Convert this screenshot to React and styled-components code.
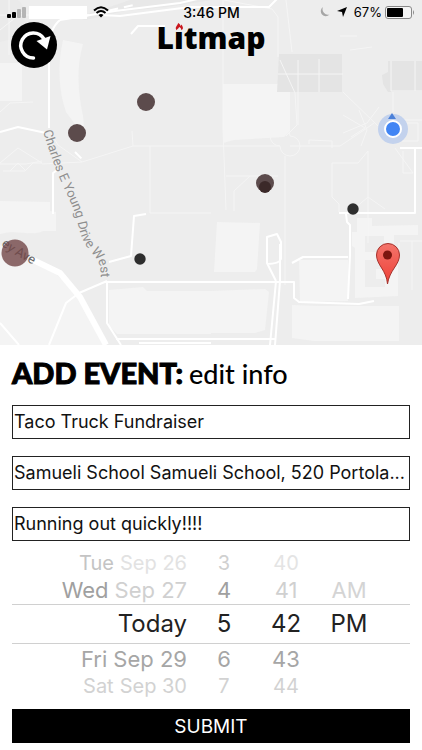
import React, { useState } from "react";
import styled, { createGlobalStyle } from "styled-components";

const GlobalStyle = createGlobalStyle`
  * { box-sizing: border-box; }
  body {
    margin: 0;
    background: #fff;
    color: #000;
    font-family: Inter, "Liberation Sans", sans-serif;
  }
`;

const Page = styled.main`
  display: flex;
  flex-direction: column;
  min-height: 100vh;
`;

const MapArea = styled.section`
  position: relative;
  height: 345px;
  overflow: hidden;
  background: #ededed;
`;

const MapDrawing = styled.svg`
  display: block;
  width: 100%;
  height: 100%;
`;

const Overlay = styled.div`
  position: absolute;
  inset: 0 0 auto 0;
`;

const StatusBar = styled.div`
  display: grid;
  grid-template-columns: 1fr auto 1fr;
  align-items: center;
  height: 24px;
  padding: 0 6px 0 7px;
  font-size: 13px;
`;

const Clock = styled.span`
  font-size: 14px;
  font-weight: 500;
`;

const StatusGroup = styled.div`
  display: flex;
  align-items: center;
  justify-content: ${(p) => (p.$end ? "flex-end" : "flex-start")};
  gap: ${(p) => p.$gap}px;
`;

const CarrierMask = styled.span`
  width: 58px;
  height: 13px;
  background: #fff;
`;

const Header = styled.header`
  display: grid;
  grid-template-columns: 46px 1fr 46px;
  align-items: start;
  padding: 0 11px;
`;

const RefreshButton = styled.button`
  width: 46px;
  height: 46px;
  margin-top: -2px;
  padding: 0;
  border: 0;
  border-radius: 50%;
  background: #000;
  cursor: pointer;
`;

const Logo = styled.h1`
  display: flex;
  justify-content: center;
  margin: 0;
  font-family: "Open Sans", sans-serif;
  font-size: 30px;
  font-weight: 800;
  line-height: 28px;
`;

const FlameLetter = styled.span`
  position: relative;
`;

const Flame = styled.svg`
  position: absolute;
  top: -1px;
  left: 50%;
  width: 8px;
  height: 8px;
  margin-left: -4px;
`;

const Form = styled.form`
  display: flex;
  flex-direction: column;
  padding: 10px 12px 8px;
`;

const Title = styled.h2`
  display: flex;
  align-items: baseline;
  gap: 6px;
  margin: 0 0 13px;
  font-family: Lato, sans-serif;
  font-size: 29px;
  font-weight: 900;
  line-height: 36px;
  -webkit-text-stroke: 1px #000;
`;

const Step = styled.span`
  font-size: 27px;
  font-weight: 500;
  -webkit-text-stroke: 0;
`;

const Fields = styled.div`
  display: flex;
  flex-direction: column;
  gap: 17px;
`;

const Field = styled.input`
  width: 100%;
  height: 34px;
  padding: 0 1px 2px;
  border: 1px solid #222;
  border-radius: 0;
  background: #fff;
  color: #111;
  font-family: inherit;
  font-size: 18px;
  text-overflow: ellipsis;
`;

const Picker = styled.div`
  display: grid;
  grid-template-columns: 176fr 72fr 52fr 98fr;
  margin: 10px 0 11px;
`;

const Wheel = styled.div`
  display: grid;
  grid-template-rows: 24px 29px 40px 29px 25px;
`;

const tones = ["#dedede", "#b4b4b4", "#222", "#a6a6a6", "#d2d2d2"];
const sizes = [20, 22, 24, 22, 20];

const Option = styled.button`
  display: flex;
  align-items: center;
  justify-content: ${(p) => (p.$end ? "flex-end" : "center")};
  gap: 6px;
  padding: 0 ${(p) => p.$inset}px 0 0;
  border: 0 solid #d0d0d0;
  border-width: ${(p) => (p.$slot === 2 ? "1px 0" : "0")};
  background: none;
  color: ${(p) => p.$tone || tones[p.$slot]};
  font-family: inherit;
  font-size: ${(p) => sizes[p.$slot]}px;
  line-height: 24px;
  white-space: nowrap;
`;

const Weekday = styled.span`
  color: ${(p) => p.$tone};
`;

const Submit = styled.button`
  height: 34px;
  border: 0;
  background: #000;
  color: #fff;
  font-family: inherit;
  font-size: 19px;
  cursor: pointer;
`;

const dates = [
  { day: "Tue", date: "Sep 26", dayTone: "#c4c4c4", tone: "#e2e2e2" },
  { day: "Wed", date: "Sep 27", dayTone: "#a0a0a0", tone: "#d0d0d0" },
  { date: "Today" },
  { day: "Fri", date: "Sep 29", dayTone: "#a6a6a6" },
  { day: "Sat", date: "Sep 30", dayTone: "#d2d2d2" },
];

const wheels = [
  { label: "Hour", values: ["3", "4", "5", "6", "7"], tones: ["#d0d0d0", "#a0a0a0"], inset: 0 },
  { label: "Minute", values: ["40", "41", "42", "43", "44"], tones: ["#e4e4e4", "#d0d0d0"], inset: 0 },
  { label: "AM or PM", values: ["", "AM", "PM", "", ""], tones: ["", "#d4d4d4"], inset: 24 },
];

function CampusMap() {
  return (
    <MapDrawing viewBox="0 0 422 345" preserveAspectRatio="xMidYMid slice" role="img" aria-label="Campus map">
      <defs>
        <path id="charles" d="M43 131C49 150 54 165 59 177C67 195 73 205 77 220C80 235 83 243 92 253C99 261 101 265 101 280V290" />
        <path id="avenue" d="M1 245L10 252L46 272" />
        <linearGradient id="pin" x1="0" y1="0" x2="0" y2="1">
          <stop offset="0" stopColor="#f4746b" />
          <stop offset="1" stopColor="#ee4037" />
        </linearGradient>
      </defs>
      <rect width="422" height="345" fill="#ededed" />
      <g fill="#f4f4f4">
        <path d="M0 63h22v38H0z" />
        <path d="M63 40l20 4c-7 24-5 48 0 72l2 22-19-26C59 92 57 66 63 40z" />
        <path d="M223 84h67v47l-6 6-50 3-11 3z" />
        <path d="M0 201l50 1v9l6 1v19H43c-12 6-24-2-43 3z" />
        <path d="M0 245l28 16 28 13 22 20 27 51H0z" />
        <path d="M109 290l34-3 4 4h64v43h-94l-8-8z" />
        <path d="M217 222l43 1-3 46-2 3h-41z" />
        <path d="M211 291l54-2 4 3-4 38-10 3h-44z" />
        <path d="M299 260h49v41l-48 1z" />
        <path fillRule="evenodd" d="M357 218h15v8l46-1v10h-24v16h4v45l-43 2v-50l-3-2v-14h5zM365 236v16h19v-16zM365 260v27h20v-8h-9v-10h9v-9z" />
        <path d="M292 305l27 1h80v35h-85l-22-3z" />
      </g>
      <g fill="#e4e4e4">
        <path d="M279 54h63v38h-65z" />
        <path d="M388 61h34v31h-34l-5-8-1-9 6-3z" />
        <path d="M0 0h18c10 7 9 31-2 38L0 42z" opacity=".3" />
        <path d="M85 20l40-9 42-4 45-7h-82l-23 8-30 9z" opacity=".6" />
      </g>
      <g fill="none" stroke="#f5f5f5" strokeWidth="1">
        <path d="M0 15h30M9 0v55M0 30l25-20M0 112l10-9 23-1M0 164h26l16-3M0 163l18-15 24 15h-9l-8 8H3M10 171l8-8 8 8M42 164l40-2 51-16h78M133 146l-1-15M150 146v67h61M82 162l-24-17-9-15M223 0v130l3 80M211 146h69a10 10 0 1 0 10-10 10 10 0 1 0-10 10M285 156v129M290 146h50l27-18 7-5M280 60l15 33 2 32-11 11M298 60v65M319 59v33M278 74h65M343 92l35 34M343 115l22 13-14 9M343 133l24-10 12-16M359 110l8 20-6 16M332 163h26l10-12v92M332 163v34l7 7v8M368 197l17 12M368 197l-14 12M226 176h52M234 211v-20l16-15M224 0l48 9 6 8v40M391 61v30h31M393 92v20M415 61v30M395 148l18 25h-10v-22M399 120h23M400 123h18v18h-18zM400 241h22M412 241v49M399 250v-7M286 0l6 52M309 144v-4l23 1v7M350 50l22-3M340 36h17" />
      </g>
      <g fill="none" stroke="#fff" strokeLinejoin="round">
        <path strokeWidth="2" d="M60 20l55-9 65-8 26-6M60 20q-11 9-11 30v78M0 132l18-5 28 6M53 214v-41l4-3M131 34l7-8h27M100 15l20 1 70-9h79l10-10" />
        <path strokeWidth="2" d="M146 214l-12 2-3 40-22 6M107 281v42l14 22M107 282h187v16l5 4 60 2 15-3M276 281l-9-18v-26l10-3 4 8v17q-2 5-14 5M276 281l-6 64M280 244v37l-5 64M79 293l28-12M79 293l-13 10-17 42M116 339h159M139 343h72M0 323l19 22M400 148h22M415 148v65h-76M346 214l1 8 3 3v30l-2 44M292 263l11-6h45" />
        <path strokeWidth="6" d="M31 259l29 14 20 24 26 48" />
        <path strokeWidth="2" strokeDasharray="9 6" d="M80 17l58-13M75 152l9 9" />
      </g>
      <g fill="#8e8e8e" fontFamily="Roboto, sans-serif" fontSize="13">
        <text><textPath href="#charles">Charles E Young Drive West</textPath></text>
        <text fill="#666"><textPath href="#avenue">ey Ave</textPath></text>
      </g>
      <g fill="#5c4b4c">
        <circle cx="146" cy="102" r="9" />
        <circle cx="77" cy="133" r="9" />
        <circle cx="265" cy="183" r="9" />
        <circle cx="265" cy="187" r="6" fill="#3b2929" />
        <circle cx="15" cy="253" r="13.5" fill="#724647" fillOpacity=".8" />
        <circle cx="140" cy="259" r="5.7" fill="#2e2e2e" />
        <circle cx="353" cy="209" r="5.7" fill="#2e2e2e" />
      </g>
      <circle cx="393" cy="129" r="15" fill="#c3d2ed" />
      <path d="M388 119l4-6 4 6z" fill="#4b80d8" />
      <circle cx="393" cy="129" r="8" fill="#4285f4" stroke="#fff" strokeWidth="2" />
      <path d="M387.5 284c-1-14-11-19-11-29a11.500 11.500 0 0 1 23 0c0 10-10 15-12 29z" fill="url(#pin)" stroke="#a5332d" strokeWidth="1" />
      <circle cx="387.500" cy="255" r="4.500" fill="#7d160f" />
    </MapDrawing>
  );
}

function Status() {
  return (
    <StatusBar>
      <StatusGroup $gap={2}>
        <svg width="20" height="13" viewBox="0 0 20 13" aria-label="Signal">
          <rect x="0" y="8" width="4" height="4" rx="1" />
          <rect x="5" y="6" width="4" height="6" rx="1" />
          <rect x="10" y="3" width="4" height="9" rx="1" fill="#b5b5b5" />
          <rect x="15" y="1" width="4" height="11" rx="1" fill="#b5b5b5" />
        </svg>
        <CarrierMask />
        <svg width="26" height="12" viewBox="-4 0 26 12" aria-label="Wi-Fi">
          <g fill="none" stroke="#000" strokeWidth="2">
            <path d="M1 4.500q7-6.500 14 0" />
            <path d="M3.500 7q4.500-4 9 0" />
          </g>
          <path d="M5.500 9q2.500-2 5 0L8 11.500z" />
        </svg>
      </StatusGroup>
      <Clock>3:46 PM</Clock>
      <StatusGroup $gap={6} $end>
        <svg width="11" height="12" viewBox="0 0 11 12" aria-label="Do not disturb">
          <path d="M4 1a5 5 0 1 0 6.500 7.500A5.500 5.500 0 0 1 4 1z" fill="#a5a5a5" />
        </svg>
        <svg width="12" height="12" viewBox="0 0 12 12" aria-label="Location">
          <path d="M11 1L7 11 6 6 1 5z" />
        </svg>
        <StatusGroup $gap={3}>
          <span>67%</span>
          <svg width="31" height="13" viewBox="0 0 31 13" aria-label="Battery">
            <rect x=".5" y=".5" width="26" height="12" rx="2.500" fill="#f5f5f5" stroke="#888" />
            <rect x="2" y="2" width="16" height="9" rx="1" />
            <path d="M28 4q2 2.500 0 5z" fill="#888" />
          </svg>
        </StatusGroup>
      </StatusGroup>
    </StatusBar>
  );
}

export default function App() {
  const [event, setEvent] = useState({
    name: "Taco Truck Fundraiser",
    place: "Samueli School Samueli School, 520 Portola...",
    details: "Running out quickly!!!!",
  });
  const update = (e) => setEvent({ ...event, [e.target.name]: e.target.value });

  return (
    <>
      <GlobalStyle />
      <Page>
        <MapArea>
          <CampusMap />
          <Overlay>
            <Status />
            <Header>
              <RefreshButton type="button" aria-label="Refresh">
                <svg width="46" height="46" viewBox="0 0 46 46" aria-hidden="true">
                  <path d="M22.500 36A12.500 12.500 0 1 1 33 17" fill="none" stroke="#fff" strokeWidth="3.500" strokeLinecap="round" />
                  <path d="M39.500 14L36 27.500 25.500 19z" fill="#fff" />
                </svg>
              </RefreshButton>
              <Logo>
                L
                <FlameLetter>
                  ı
                  <Flame viewBox="0 0 10 10" aria-hidden="true">
                    <path d="M2 9C-1 5 3 4 4 0c2 1 3 3 3 4l1-2c3 4 2 6 0 7 0-2-1-3-3-4 0 2-2 2-3 4z" fill="#c9161d" />
                  </Flame>
                </FlameLetter>
                tmap
              </Logo>
            </Header>
          </Overlay>
        </MapArea>
        <Form onSubmit={(e) => e.preventDefault()}>
          <Title>
            ADD EVENT: <Step>edit info</Step>
          </Title>
          <Fields>
            <Field name="name" aria-label="Event name" value={event.name} onChange={update} />
            <Field name="place" aria-label="Location" value={event.place} onChange={update} />
            <Field name="details" aria-label="Details" value={event.details} onChange={update} />
          </Fields>
          <Picker>
            <Wheel role="group" aria-label="Date">
              {dates.map((d, i) => (
                <Option type="button" key={d.date} $slot={i} $tone={d.tone} $inset={1} $end>
                  {d.day && <Weekday $tone={d.dayTone}>{d.day}</Weekday>}
                  <span>{d.date}</span>
                </Option>
              ))}
            </Wheel>
            {wheels.map((w) => (
              <Wheel role="group" aria-label={w.label} key={w.label}>
                {w.values.map((v, i) => (
                  <Option
                    type="button"
                    key={i}
                    disabled={!v}
                    $slot={i}
                    $tone={w.tones[i]}
                    $inset={w.inset}
                  >
                    {v}
                  </Option>
                ))}
              </Wheel>
            ))}
          </Picker>
          <Submit type="submit">SUBMIT</Submit>
        </Form>
      </Page>
    </>
  );
}
